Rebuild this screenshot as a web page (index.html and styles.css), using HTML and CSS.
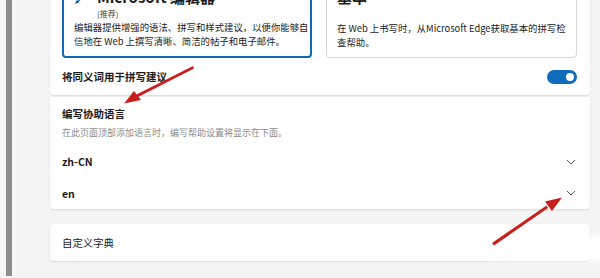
FILE: index.html
```html
<!DOCTYPE html>
<html lang="zh-CN">
<head>
    <meta charset="UTF-8">
    <meta name="viewport" content="width=device-width, initial-scale=1.0">
    <title>语言 - 设置</title>
    <link rel="stylesheet" href="styles.css">
</head>
<body>
    <div class="page">
        <div class="rail"></div>
        <main class="column">
            <section class="card proof-card">
                <div class="choices">
                    <div class="choice selected">
                        <div class="choice-head">
                            <svg class="editor-logo" viewBox="0 0 16 16" width="14" height="14">
                                <path d="M2 15 L9 3 L13 2 L12 6 L5 14 Z" fill="#1d7fd6"/>
                                <path d="M1 16 L6 14 L3 12 Z" fill="#0b4f9c"/>
                            </svg>
                            <span class="choice-title">Microsoft 编辑器</span>
                        </div>
                        <div class="choice-tag">(推荐)</div>
                        <p class="choice-desc">编辑器提供增强的语法、拼写和样式建议，以便你能够自<br>信地在 Web 上撰写清晰、简洁的帖子和电子邮件。</p>
                    </div>
                    <div class="choice">
                        <div class="choice-head">
                            <span class="choice-title">基本</span>
                        </div>
                        <p class="choice-desc plain">在 Web 上书写时，从Microsoft Edge获取基本的拼写检<br>查帮助。</p>
                    </div>
                </div>
                <div class="row">
                    <span class="row-label">将同义词用于拼写建议</span>
                    <span class="toggle"><span class="knob"></span></span>
                </div>
            </section>

            <section class="card lang-card">
                <div class="section-head">
                    <div class="row-label">编写协助语言</div>
                    <div class="hint">在此页面顶部添加语言时，编写帮助设置将显示在下面。</div>
                </div>
                <div class="lang-row">
                    <span class="lang">zh-CN</span>
                    <svg class="chevron" viewBox="0 0 10 6" width="10" height="6"><path d="M1 1 L5 5 L9 1" fill="none" stroke="#555" stroke-width="1"/></svg>
                </div>
                <div class="lang-row">
                    <span class="lang">en</span>
                    <svg class="chevron" viewBox="0 0 10 6" width="10" height="6"><path d="M1 1 L5 5 L9 1" fill="none" stroke="#555" stroke-width="1"/></svg>
                </div>
            </section>

            <section class="card dict-card">
                <span class="dict-label">自定义字典</span>
            </section>
        </main>

        <svg class="marks" viewBox="0 0 600 278" width="600" height="278">
            <defs>
                <filter id="soft" x="-20%" y="-50%" width="140%" height="200%">
                    <feGaussianBlur stdDeviation="3"/>
                </filter>
            </defs>
            <rect x="488" y="236" width="130" height="24" fill="#ffffff" filter="url(#soft)"/>
            <g fill="#c91f1c">
                <polygon points="193,66 194,68.5 138,97 136.5,94.5"/>
                <polygon points="124,103.5 134,91 141,100"/>
                <polygon points="492,243 494,245.5 548,208 546.5,205.5"/>
                <polygon points="562,197.5 545,201.5 552,211"/>
            </g>
        </svg>
    </div>
</body>
</html>
```

FILE: styles.css
```css
body {
    margin: 0;
    background: #f5f5f5;
    font-family: "Noto Sans CJK SC", "Noto Sans", sans-serif;
    color: #1b1b1b;
}
.page {
    position: relative;
    display: flex;
    width: 600px;
    height: 278px;
    overflow: hidden;
}
.rail {
    flex: none;
    width: 6px;
    height: 276px;
    margin-left: 6px;
    background: #8d8d8d;
}
.column {
    width: 540px;
    margin-left: 38px;
    margin-top: -39px;
    display: flex;
    flex-direction: column;
}
.card {
    background: #fff;
    border-radius: 4px;
    box-shadow: 0 1px 2px rgba(0, 0, 0, 0.12);
}
.proof-card {
    padding: 14px 13px 0 12px;
    border-radius: 0 0 4px 4px;
}
.choices {
    display: grid;
    grid-template-columns: 250px 251px;
    column-gap: 14px;
    height: 83px;
}
.choice {
    border: 1px solid #d6d6d6;
    border-radius: 4px;
    padding: 11px 10px 0 10px;
    overflow: hidden;
}
.choice.selected {
    border: 2px solid #1167b8;
    padding: 10px 9px 0 10px;
}
.choice-head {
    display: flex;
    align-items: center;
    gap: 9px;
    height: 20px;
}
.editor-logo {
    flex: none;
}
.choice-title {
    font-size: 15px;
    font-weight: bold;
    line-height: 20px;
    white-space: nowrap;
}
.choice-tag {
    height: 13px;
    font-size: 8px;
    line-height: 13px;
    margin-left: 23px;
    color: #444;
}
.choice-desc {
    margin: 0;
    font-size: 9.4px;
    line-height: 14px;
    color: #222;
    white-space: nowrap;
}
.choice-desc.plain {
    margin-top: 14px;
}
.row {
    display: flex;
    justify-content: space-between;
    align-items: center;
    height: 37px;
}
.row-label {
    font-size: 10.5px;
    font-weight: 600;
    line-height: 16px;
}
.toggle {
    display: flex;
    align-items: center;
    justify-content: flex-end;
    width: 30px;
    height: 14px;
    padding: 0 3px;
    box-sizing: border-box;
    border-radius: 7px;
    background: #0f6cbd;
}
.knob {
    width: 8px;
    height: 8px;
    border-radius: 50%;
    background: #fff;
}
.lang-card {
    margin-top: 2px;
    padding: 0 13px 0 12px;
    border-radius: 0 0 4px 4px;
}
.section-head {
    padding-top: 9px;
    height: 49px;
    box-sizing: border-box;
}
.hint {
    margin-top: 4px;
    font-size: 9px;
    line-height: 14px;
    color: #8a8a8a;
}
.lang-row {
    display: flex;
    justify-content: space-between;
    align-items: center;
    height: 31px;
}
.lang-row + .lang-row {
    height: 32px;
}
.lang {
    font-size: 10.5px;
    font-weight: bold;
}
.chevron {
    margin-right: 1px;
}
.dict-card {
    margin-top: 15px;
    height: 37px;
    padding: 0 12px;
    display: flex;
    align-items: center;
}
.dict-label {
    font-size: 10.4px;
}
.marks {
    position: absolute;
    left: 0;
    top: 0;
    pointer-events: none;
}
```
